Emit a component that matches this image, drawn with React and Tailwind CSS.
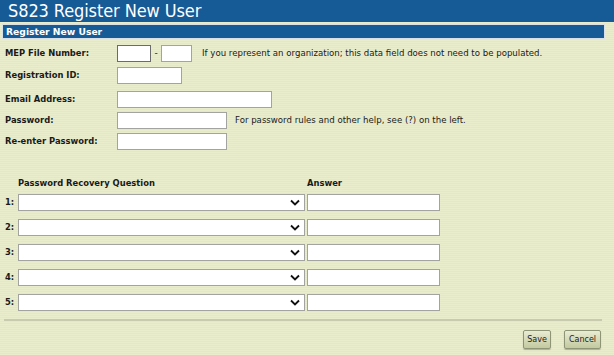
import React from "react";

const font = { fontFamily: '"DejaVu Sans", Verdana, sans-serif' };

function Chevron() {
  return (
    <svg width="10" height="7" viewBox="0 0 10 7" className="shrink-0">
      <path d="M1 1.5 L5 5.5 L9 1.5" fill="none" stroke="#111" strokeWidth="1.8" />
    </svg>
  );
}

function Input({ w, dark }) {
  return (
    <div
      className={`h-[17px] bg-white border ${dark ? "border-[#6b6b6b]" : "border-[#a3a3a0]"}`}
      style={{ width: w }}
    />
  );
}

function Label({ children }) {
  return (
    <div className="w-[117px] shrink-0 pl-[5px] text-[8.4px] font-bold text-[#1a1a1a] leading-none">
      {children}
    </div>
  );
}

function QRow({ n }) {
  return (
    <div className="flex items-center h-[17px]">
      <div className="w-[18px] pl-[5px] text-[8.4px] font-bold text-[#1a1a1a] leading-none">{n}:</div>
      <div className="w-[287px] h-[17px] bg-white border border-[#a3a3a0] flex items-center justify-end pr-[4px]">
        <Chevron />
      </div>
      <div className="ml-[2px] w-[133px] h-[17px] bg-white border border-[#a3a3a0]" />
    </div>
  );
}

export default function App() {
  return (
    <div
      className="w-[614px] h-[355px] overflow-hidden bg-[#e9eccb] bg-[repeating-linear-gradient(180deg,#eaedcc_0px,#eaedcc_1px,#e5e8c6_1px,#e5e8c6_2px)] text-[#1a1a1a]"
      style={font}
    >
      <div className="h-[22px] bg-[#165a96] pl-[8px] flex items-center">
        <span className="text-white text-[18px] leading-none tracking-[-0.1px]" style={{ fontFamily: '"DejaVu Sans Condensed", "DejaVu Sans", sans-serif' }}>
          S823 Register New User
        </span>
      </div>
      <div className="mt-[2px] ml-[2px] w-[603px] h-[15px] bg-[#165a96] border border-[#d6e0e6] flex items-center pl-[3px]">
        <span className="text-white text-[9.2px] font-bold leading-none">Register New User</span>
      </div>

      <div className="mt-[6px] flex items-center">
        <Label>MEP File Number:</Label>
        <Input w={34} dark />
        <span className="w-[10px] text-center text-[9px] leading-none">-</span>
        <Input w={31} />
        <span className="ml-[10px] text-[8.6px] leading-none">
          If you represent an organization; this data field does not need to be populated.
        </span>
      </div>
      <div className="mt-[5px] flex items-center">
        <Label>Registration ID:</Label>
        <Input w={65} />
      </div>
      <div className="mt-[7px] flex items-center">
        <Label>Email Address:</Label>
        <Input w={155} />
      </div>
      <div className="mt-[4px] flex items-center">
        <Label>Password:</Label>
        <Input w={110} />
        <span className="ml-[8px] text-[8.6px] leading-none">
          For password rules and other help, see (?) on the left.
        </span>
      </div>
      <div className="mt-[4px] flex items-center">
        <Label>Re-enter Password:</Label>
        <Input w={110} />
      </div>

      <div className="mt-[28px] flex h-[10px] items-center text-[8.4px] font-bold leading-none">
        <div className="pl-[18px] w-[307px]">Password Recovery Question</div>
        <div>Answer</div>
      </div>

      <div className="mt-[6px] flex flex-col gap-[8px]">
        <QRow n={1} />
        <QRow n={2} />
        <QRow n={3} />
        <QRow n={4} />
        <QRow n={5} />
      </div>

      <div className="mt-[8px] ml-[4px] w-[598px] h-[2px] bg-[#c9cbb0]" />

      <div className="mt-[9px] flex justify-end gap-[13px] pr-[13px]">
        <button className="w-[28px] h-[19px] rounded-[2px] border border-[#8e9577] bg-[linear-gradient(180deg,#e9ecd2,#c3c9a0)] text-[8px] leading-none text-[#222] shadow-[0_1px_1px_rgba(0,0,0,0.25)]">
          Save
        </button>
        <button className="w-[37px] h-[19px] rounded-[2px] border border-[#8e9577] bg-[linear-gradient(180deg,#e9ecd2,#c3c9a0)] text-[8px] leading-none text-[#222] shadow-[0_1px_1px_rgba(0,0,0,0.25)]">
          Cancel
        </button>
      </div>
    </div>
  );
}
